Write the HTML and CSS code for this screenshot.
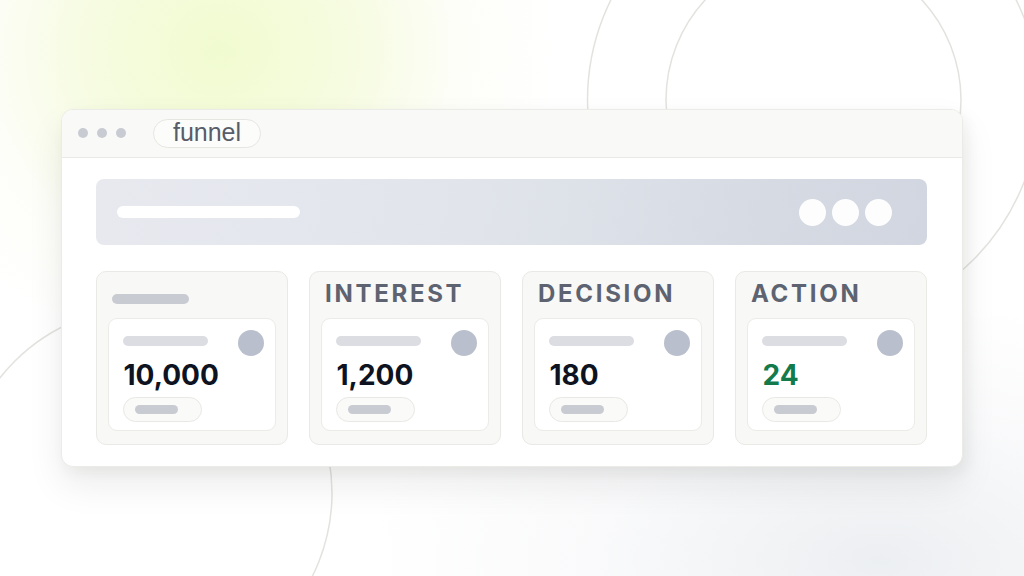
FILE: index.html
```html
<!DOCTYPE html>
<html lang="en">
<head>
<meta charset="utf-8">
<title>funnel</title>
<link rel="stylesheet" href="styles.css">
</head>
<body>
<div class="stage">
  <svg class="deco" width="1024" height="576" viewBox="0 0 1024 576" aria-hidden="true">
    <circle cx="813.5" cy="100" r="147.5" fill="none" stroke="#e2e2de" stroke-width="1.5"/>
    <circle cx="813.5" cy="100" r="226" fill="none" stroke="#e2e2de" stroke-width="1.5"/>
    <circle cx="146" cy="493" r="186" fill="none" stroke="#e2e2de" stroke-width="1.5"/>
  </svg>

  <div class="window">
    <div class="titlebar">
      <div class="dots"><span></span><span></span><span></span></div>
      <div class="tab">funnel</div>
    </div>
    <div class="content">
      <div class="banner">
        <div class="banner-bar"></div>
        <div class="banner-dots"><span></span><span></span><span></span></div>
      </div>
      <div class="columns">
        <div class="col">
          <div class="col-head"><div class="head-bar"></div></div>
          <div class="card">
            <div class="card-top"><div class="card-bar"></div><div class="card-dot"></div></div>
            <div class="num">10,000</div>
            <div class="pill"><div class="pill-bar"></div></div>
          </div>
        </div>
        <div class="col">
          <div class="col-head"><div class="label">INTEREST</div></div>
          <div class="card">
            <div class="card-top"><div class="card-bar"></div><div class="card-dot"></div></div>
            <div class="num">1,200</div>
            <div class="pill"><div class="pill-bar"></div></div>
          </div>
        </div>
        <div class="col">
          <div class="col-head"><div class="label">DECISION</div></div>
          <div class="card">
            <div class="card-top"><div class="card-bar"></div><div class="card-dot"></div></div>
            <div class="num">180</div>
            <div class="pill"><div class="pill-bar"></div></div>
          </div>
        </div>
        <div class="col">
          <div class="col-head"><div class="label">ACTION</div></div>
          <div class="card">
            <div class="card-top"><div class="card-bar"></div><div class="card-dot"></div></div>
            <div class="num num-green">24</div>
            <div class="pill"><div class="pill-bar"></div></div>
          </div>
        </div>
      </div>
    </div>
  </div>
</div>
</body>
</html>
```

FILE: styles.css
```css
* { box-sizing: border-box; }
html, body { margin: 0; padding: 0; }
body {
  width: 1024px;
  height: 576px;
  overflow: hidden;
  font-family: Inter, "Liberation Sans", Arial, sans-serif;
  background: #ffffff;
}
.stage {
  position: relative;
  width: 1024px;
  height: 576px;
  overflow: hidden;
  padding: 109px 0 0 61px;
  background:
    radial-gradient(ellipse 340px 320px at 220px 50px, rgba(241, 251, 208, 1) 0%, rgba(244, 251, 218, 0.8) 40%, rgba(250, 252, 238, 0.4) 70%, rgba(255, 255, 255, 0) 100%),
    radial-gradient(ellipse 520px 260px at 880px 560px, rgba(234, 237, 240, 0.9) 0%, rgba(244, 245, 247, 0.5) 55%, rgba(255, 255, 255, 0) 100%),
    #ffffff;
}
.deco {
  position: absolute;
  left: 0;
  top: 0;
}
.window {
  position: relative;
  z-index: 1;
  width: 902px;
  height: 358px;
  background: #ffffff;
  border: 1px solid #ebebe7;
  border-radius: 12px;
  overflow: hidden;
  box-shadow: 0 18px 36px rgba(30, 30, 20, 0.08), 4px 6px 14px rgba(30, 30, 20, 0.05);
}
.titlebar {
  height: 48px;
  background: #f9f9f7;
  border-bottom: 1.5px solid #e9e9e5;
  display: flex;
  align-items: center;
  padding-left: 16px;
  padding-bottom: 1px;
}
.dots { display: flex; gap: 9px; }
.dots span {
  width: 10px;
  height: 10px;
  border-radius: 50%;
  background: #c9cbd3;
}
.tab {
  margin-left: 27px;
  width: 108px;
  height: 29px;
  border: 1.5px solid #e5e5e1;
  border-radius: 15px;
  background: #fcfcfb;
  color: #585d6a;
  font-family: "Liberation Sans", Arial, sans-serif;
  font-size: 25px;
  line-height: 24px;
  text-align: center;
  font-weight: 400;
}
.content {
  padding: 21px 35px 0 34px;
}
.banner {
  height: 66px;
  border-radius: 8px;
  background: linear-gradient(100deg, #e7e9ef 0%, #e1e5eb 45%, #d6dae3 80%, #d1d6e0 100%);
  display: flex;
  align-items: center;
  justify-content: space-between;
  padding: 0 35px 0 21px;
}
.banner-bar {
  width: 183px;
  height: 12px;
  border-radius: 6px;
  background: #ffffff;
}
.banner-dots { display: flex; gap: 6px; }
.banner-dots span {
  width: 27px;
  height: 27px;
  border-radius: 50%;
  background: #fdfdfd;
}
.columns {
  margin-top: 26px;
  display: grid;
  grid-template-columns: repeat(4, 192px);
  gap: 21px;
}
.col {
  height: 174px;
  background: #f8f8f6;
  border: 1.5px solid #e9e9e5;
  border-radius: 10px;
  padding: 0 11px 0 11px;
}
.col-head {
  height: 45.5px;
  padding-top: 9.5px;
  padding-left: 4px;
}
.head-bar {
  width: 77px;
  height: 10px;
  border-radius: 5px;
  background: #c9cbd3;
  margin-top: 12px;
}
.label {
  font-size: 24px;
  line-height: 24px;
  font-weight: 700;
  letter-spacing: 2.7px;
  color: #5d6371;
}
.card {
  height: 113px;
  background: #ffffff;
  border: 1.5px solid #ebebe7;
  border-radius: 9px;
  padding: 11.5px 11.5px 0 13.5px;
}
.card-top {
  height: 26px;
  display: flex;
  justify-content: space-between;
  align-items: flex-start;
}
.card-bar {
  margin-top: 6px;
  width: 85px;
  height: 10px;
  border-radius: 5px;
  background: #dcdde2;
}
.card-dot {
  width: 26px;
  height: 26px;
  border-radius: 50%;
  background: #b9bfcc;
}
.num {
  margin-top: 4.5px;
  padding-left: 1px;
  font-size: 28px;
  line-height: 28px;
  font-weight: 700;
  color: #0e1321;
}
.num-green { color: #137a4b; }
.pill {
  margin-top: 8.5px;
  width: 79px;
  height: 25px;
  border: 1.5px solid #e8e8e4;
  border-radius: 13px;
  background: #fafaf8;
  display: flex;
  align-items: center;
  padding-left: 11px;
}
.pill-bar {
  width: 43px;
  height: 9px;
  border-radius: 5px;
  background: #c9cbd3;
}
```
